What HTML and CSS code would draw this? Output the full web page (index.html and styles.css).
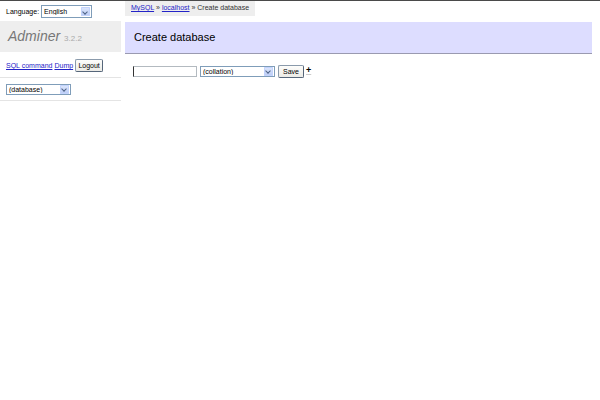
FILE: index.html
```html
<!DOCTYPE html>
<html lang="en">
<head>
    <meta charset="UTF-8">
    <title>Create database - Adminer</title>
    <link rel="stylesheet" href="styles.css">
</head>
<body>
    <div class="layout">
        <div class="menu">
            <form class="lang">
                <span>Language:</span>
                <span class="select lang-select"><select><option>English</option></select></span>
            </form>
            <h1>Adminer <span class="version">3.2.2</span></h1>
            <p class="links">
                <a href="#">SQL command</a>
                <a href="#">Dump</a>
                <button class="btn" type="button">Logout</button>
            </p>
            <p class="dbs">
                <span class="select db-select"><select><option>(database)</option></select></span>
            </p>
        </div>

        <div class="content">
            <p class="breadcrumb">
                <a href="#">MySQL</a> &raquo; <a href="#">localhost</a> &raquo; Create database
            </p>
            <h2>Create database</h2>
            <form class="create">
                <input type="text" class="name">
                <span class="select coll-select"><select><option>(collation)</option></select></span>
                <button class="btn" type="button">Save</button>
                <a class="plus" href="#">+</a>
            </form>
        </div>
    </div>
</body>
</html>
```

FILE: styles.css
```css
* {
    box-sizing: border-box;
}

body {
    margin: 0;
    border-top: 1px solid #4a4a4a;
    font-family: "Liberation Sans", Arial, sans-serif;
    font-size: 7px;
    color: #000;
    background: #fff;
}

a {
    color: #2323c8;
}

.layout {
    display: grid;
    grid-template-columns: 121px 1fr;
    column-gap: 4px;
    padding-right: 8px;
}

/* select boxes, XP look */
.select {
    position: relative;
    display: inline-block;
    height: 13px;
    border: 1px solid #7f9db9;
    background: #fff;
}

.select select {
    appearance: none;
    -webkit-appearance: none;
    width: 100%;
    height: 100%;
    border: none;
    background: transparent;
    font: inherit;
    padding: 0 0 0 2px;
    margin: 0;
    color: #000;
}

.select::after {
    content: "";
    position: absolute;
    top: 1px;
    right: 1px;
    width: 9px;
    height: 9px;
    background: linear-gradient(#dfe8fc, #b9cbf5);
    border-radius: 1px;
    box-shadow: inset 0 0 0 1px #c3d3fd;
}

.select::before {
    content: "";
    position: absolute;
    top: 4px;
    right: 4px;
    width: 3px;
    height: 3px;
    border-right: 1px solid #4d6185;
    border-bottom: 1px solid #4d6185;
    transform: rotate(45deg);
    z-index: 1;
}

.btn {
    height: 13px;
    padding: 0 4px;
    font: inherit;
    color: #000;
    border: 1px solid #8a9aab;
    border-right-color: #56667a;
    border-bottom-color: #56667a;
    border-radius: 2px;
    background: linear-gradient(#fdfdfb, #ecebe6);
}

/* sidebar */
.lang {
    height: 20px;
    display: flex;
    align-items: center;
    gap: 2px;
    padding-left: 6px;
    margin: 0;
}

.lang-select {
    width: 51px;
}

h1 {
    margin: 0;
    height: 31px;
    padding-left: 8px;
    background: #eee;
    font-size: 14px;
    font-weight: normal;
    font-style: italic;
    color: #777;
    line-height: 31px;
}

h1 .version {
    font-size: 8px;
    font-style: normal;
    color: #aaa;
}

.links {
    margin: 0;
    padding: 7px 6px 5px;
    border-bottom: 1px solid #e4e4e4;
    display: flex;
    align-items: center;
    gap: 2px;
}

.links .btn {
    height: 13px;
    width: 28px;
    padding: 0;
}

.dbs {
    margin: 0;
    padding: 6px 6px 5px;
    border-bottom: 1px solid #e4e4e4;
    line-height: 0;
}

.db-select {
    width: 65px;
    height: 11px;
    line-height: normal;
}

.db-select::after {
    top: 0;
    height: 9px;
}

.db-select::before {
    top: 2px;
}

/* main */
.breadcrumb {
    display: inline-block;
    justify-self: start;
    margin: 0;
    height: 15px;
    line-height: 14px;
    padding: 0 6px;
    background: #eee;
    color: #333;
}

.content {
    display: flex;
    flex-direction: column;
    align-items: flex-start;
}

h2 {
    align-self: stretch;
    margin: 6px 0 0;
    height: 32px;
    padding-left: 9px;
    background: #ddf;
    border-bottom: 1px solid #9a9ab0;
    font-size: 11px;
    font-weight: normal;
    line-height: 31px;
}

.create {
    display: flex;
    align-items: center;
    gap: 3px;
    margin: 11px 0 0;
    padding-left: 8px;
}

.name {
    width: 64px;
    height: 11px;
    padding: 0;
    border: 1px solid #b3bac0;
    border-left-color: #333;
    font: inherit;
}

.coll-select {
    width: 75px;
    height: 11px;
}

.coll-select::after {
    top: 0;
}

.coll-select::before {
    top: 2px;
}

.plus {
    align-self: flex-start;
    margin: 1px 0 0 -1px;
    font-size: 9px;
    font-weight: bold;
    color: #000;
    line-height: 8px;
    text-decoration-color: #ccc;
}
```
